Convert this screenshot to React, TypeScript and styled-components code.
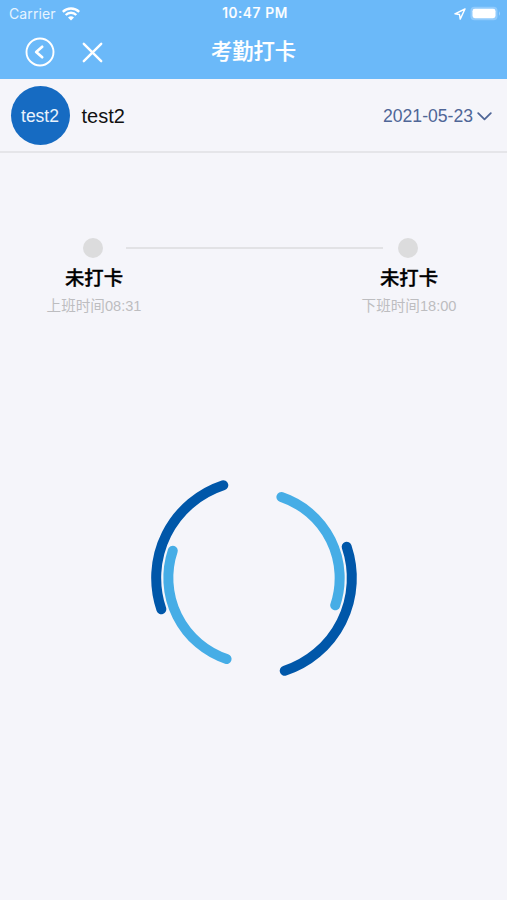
import React from "react";
import styled, { createGlobalStyle } from "styled-components";

const GlobalStyle = createGlobalStyle`
  * { box-sizing: border-box; }
  body {
    margin: 0;
    background: #f5f5fa;
    font-family: "Liberation Sans", "Noto Sans CJK SC", sans-serif;
  }
  svg { display: block; }
`;

const Screen = styled.main`
  height: 900px;
  display: flex;
  flex-direction: column;
  background: #f5f5fa;
  overflow: hidden;
`;

const Header = styled.header`
  height: 79px;
  flex: none;
  background: #6bb9f9;
  color: #fff;
`;

const StatusBar = styled.div`
  height: 27px;
  display: grid;
  grid-template-columns: 1fr auto 1fr;
  align-items: center;
  padding: 0 6px 0 9px;
  font: 14px/27px Inter, sans-serif;
`;

const Carrier = styled.div`
  display: flex;
  align-items: center;
  gap: 6px;
  color: #e6f4ff;
  letter-spacing: 0.1px;
`;

const Clock = styled.div`
  font-size: 13.8px;
  font-weight: 500;
  letter-spacing: 0.6px;
  -webkit-text-stroke: 0.2px #fff;
`;

const Indicators = styled.div`
  display: flex;
  justify-content: flex-end;
  align-items: center;
  gap: 4px;
`;

const NavBar = styled.nav`
  height: 50px;
  display: grid;
  grid-template-columns: 1fr auto 1fr;
  align-items: center;
  padding: 0 25px;
`;

const NavButtons = styled.div`
  display: flex;
  align-items: center;
  gap: 27px;
`;

const IconButton = styled.button`
  padding: 0;
  border: 0;
  background: none;
  color: inherit;
`;

const Title = styled.h1`
  margin: 0;
  font-size: 21.3px;
  line-height: 30px;
  font-weight: 500;
  -webkit-text-stroke: 0.2px #fff;
`;

const UserRow = styled.section`
  height: 74px;
  flex: none;
  display: flex;
  align-items: center;
  padding: 0 15px 0 10.5px;
  border-bottom: 2px solid #e5e5e9;
`;

const Avatar = styled.div`
  width: 59px;
  height: 59px;
  border-radius: 50%;
  background: #166bc2;
  color: #e8f2fc;
  display: flex;
  align-items: center;
  justify-content: center;
  padding-top: 2px;
  font-size: 17.5px;
`;

const UserName = styled.div`
  margin-left: 12px;
  padding-top: 2px;
  font-size: 20px;
  color: #111;
`;

const DatePicker = styled.div`
  margin-left: auto;
  padding-top: 3px;
  display: flex;
  align-items: center;
  gap: 4px;
  font-size: 17.6px;
  color: #4f6697;
`;

const Timeline = styled.section`
  display: flex;
  justify-content: space-between;
  padding: 84.5px 43px 0 39px;
`;

const Punch = styled.div`
  width: 110px;
  display: flex;
  flex-direction: column;
  align-items: center;
`;

const Dot = styled.i`
  width: 20px;
  height: 20px;
  border-radius: 50%;
  background: #dcdcdd;
  margin-right: 2px;
`;

const PunchState = styled.div`
  margin-top: 5.5px;
  font-size: 19.4px;
  line-height: 30px;
  font-weight: 500;
  color: #000;
  -webkit-text-stroke: 0.3px #000;
`;

const PunchTime = styled.div`
  margin-top: 2px;
  font-size: 14.6px;
  line-height: 22px;
  color: #bdbdc0;
  white-space: nowrap;
`;

const Connector = styled.div`
  flex: 1;
  height: 2px;
  margin: 9.5px -29px 0 -23px;
  background: #e2e2e5;
`;

const SpinnerArea = styled.section`
  display: flex;
  justify-content: center;
  margin-top: 155.5px;
  padding-left: 1px;
`;

const punches = [
  { state: "未打卡", time: "上班时间08:31" },
  { state: "未打卡", time: "下班时间18:00" },
];

function PunchItem({ state, time }: { state: string; time: string }) {
  return (
    <Punch>
      <Dot />
      <PunchState>{state}</PunchState>
      <PunchTime>{time}</PunchTime>
    </Punch>
  );
}

export default function App() {
  return (
    <Screen>
      <GlobalStyle />
      <Header>
        <StatusBar>
          <Carrier>
            Carrier
            <svg width="18" height="14" viewBox="0 0 18 14" fill="none" stroke="#fff" strokeWidth="2.4">
              <path d="M.8 4.8a11.7 11.7 0 0 1 16.4 0M3.7 8a7.5 7.5 0 0 1 10.6 0" />
              <path d="M9 13.6 6 10.6a4.3 4.3 0 0 1 6 0z" fill="#fff" stroke="none" />
            </svg>
          </Carrier>
          <Clock>10:47 PM</Clock>
          <Indicators>
            <svg width="12" height="12" viewBox="0 0 12 12" fill="none" stroke="#fff" strokeWidth="1.4" strokeLinejoin="round">
              <path d="M11 1 .9 5.8l4.6.7.7 4.6z" />
            </svg>
            <svg width="31" height="15" viewBox="0 0 31 15">
              <rect x=".5" y=".8" width="27" height="13.4" rx="4" fill="#91cbfc" />
              <rect x="2.5" y="2.8" width="23" height="9.4" rx="2.4" fill="#fff" />
              <path d="M29 5.2q2 2.3 0 4.6z" fill="#a1d2fc" />
            </svg>
          </Indicators>
        </StatusBar>
        <NavBar>
          <NavButtons>
            <IconButton aria-label="返回">
              <svg width="30" height="30" viewBox="0 0 30 30" fill="none" stroke="currentColor" strokeLinecap="round" strokeLinejoin="round">
                <circle cx="15" cy="15" r="13.5" strokeWidth="1.9" />
                <path d="m17.2 9.8-6 5.2 6 5.2" strokeWidth="2.7" />
              </svg>
            </IconButton>
            <IconButton aria-label="关闭">
              <svg width="21" height="21" viewBox="0 0 21 21" fill="none" stroke="currentColor" strokeWidth="2.4" strokeLinecap="round">
                <path d="m1.8 1.8 17.4 17.4M19.2 1.8 1.8 19.2" />
              </svg>
            </IconButton>
          </NavButtons>
          <Title>考勤打卡</Title>
        </NavBar>
      </Header>
      <UserRow>
        <Avatar>test2</Avatar>
        <UserName>test2</UserName>
        <DatePicker>
          2021-05-23
          <svg width="15" height="9" viewBox="0 0 15 9" fill="none" stroke="currentColor" strokeWidth="1.8" strokeLinecap="round" strokeLinejoin="round">
            <path d="m1.2 1.2 6.3 6.1 6.3-6.1" />
          </svg>
        </DatePicker>
      </UserRow>
      <Timeline>
        <PunchItem {...punches[0]} />
        <Connector />
        <PunchItem {...punches[1]} />
      </Timeline>
      <SpinnerArea>
        <svg width="210" height="210" viewBox="-105 -105 210 210" fill="none" strokeWidth="10" strokeLinecap="round">
          <g stroke="#0057a9">
            <path d="M-30.7-92.8A97.7 97.7 0 0 0-92.7 31.2" />
            <path d="M30.7 92.8A97.7 97.7 0 0 0 92.7-31.2" />
          </g>
          <g stroke="#46ade6">
            <path d="M27.4-81A85.5 85.5 0 0 1 81.2 27.3" />
            <path d="M-27.4 81A85.5 85.5 0 0 1-81.2-27.3" />
          </g>
        </svg>
      </SpinnerArea>
    </Screen>
  );
}
